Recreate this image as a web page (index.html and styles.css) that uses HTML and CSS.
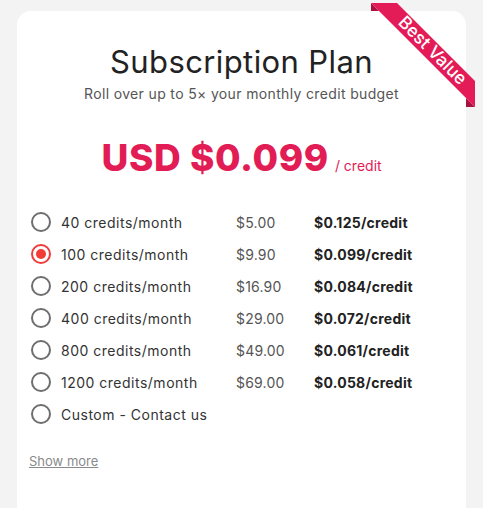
FILE: index.html
```html
<!DOCTYPE html>
<html>
<head>
<meta charset="utf-8">
<link rel="stylesheet" href="styles.css">
</head>
<body>
<div class="card">
  <svg class="ribbon" width="104" height="104" viewBox="0 0 104 104">
    <polygon points="0,0 8,8 0,8" fill="#a9123f"/>
    <polygon points="95,95 104,104 95,104" fill="#a9123f"/>
    <polygon points="0,0 26,0 104,78 104,104" fill="#e31c58"/>
    <text x="0" y="0" transform="translate(62,47) rotate(45)" text-anchor="middle" dominant-baseline="central" class="ribbon-text">Best Value</text>
  </svg>
  <h1 class="title">Subscription Plan</h1>
  <p class="subtitle">Roll over up to 5× your monthly credit budget</p>
  <div class="price"><span class="amount">USD $0.099</span><span class="unit">/ credit</span></div>
  <ul class="plans">
    <li class="plan"><span class="radio"></span><span class="label">40 credits/month</span><span class="cost">$5.00</span><span class="per">$0.125/credit</span></li>
    <li class="plan"><span class="radio checked"></span><span class="label">100 credits/month</span><span class="cost">$9.90</span><span class="per">$0.099/credit</span></li>
    <li class="plan"><span class="radio"></span><span class="label">200 credits/month</span><span class="cost">$16.90</span><span class="per">$0.084/credit</span></li>
    <li class="plan"><span class="radio"></span><span class="label">400 credits/month</span><span class="cost">$29.00</span><span class="per">$0.072/credit</span></li>
    <li class="plan"><span class="radio"></span><span class="label">800 credits/month</span><span class="cost">$49.00</span><span class="per">$0.061/credit</span></li>
    <li class="plan"><span class="radio"></span><span class="label">1200 credits/month</span><span class="cost">$69.00</span><span class="per">$0.058/credit</span></li>
    <li class="plan"><span class="radio"></span><span class="label">Custom - Contact us</span></li>
  </ul>
  <a class="more" href="#">Show more</a>
</div>
</body>
</html>
```
FILE: styles.css
```css
* { box-sizing: border-box; }
html, body { margin: 0; padding: 0; }
body {
  background: #f3f3f3;
  font-family: "Inter", "Liberation Sans", sans-serif;
  color: #333;
  height: 508px;
  overflow: hidden;
}
.card {
  position: relative;
  margin: 11px 0 0 17px;
  width: 449px;
  height: 520px;
  background: #fff;
  border-radius: 14px;
  padding: 33px 0 0 0;
}
.ribbon {
  position: absolute;
  top: -8px;
  right: -9px;
  overflow: visible;
}
.ribbon-text {
  fill: #fff;
  font-family: "Inter", sans-serif;
  font-size: 17.5px;
  font-weight: 500;
}
.title {
  margin: 0;
  text-align: center;
  font-size: 31px;
  font-weight: 400;
  letter-spacing: 0.4px;
  line-height: 36px;
  color: #222;
}
.subtitle {
  margin: 4px 0 0;
  text-align: center;
  font-size: 14px;
  letter-spacing: 0.35px;
  line-height: 20px;
  color: #555;
}
.price {
  margin-top: 32px;
  display: flex;
  justify-content: center;
  align-items: baseline;
  gap: 6px;
  color: #e21c55;
}
.amount {
  font-size: 37px;
  font-weight: 800;
  letter-spacing: 0.6px;
  line-height: 44px;
}
.unit {
  font-size: 14px;
}
.plans {
  list-style: none;
  margin: 26px 0 0;
  padding: 0 0 0 14px;
}
.plan {
  display: grid;
  grid-template-columns: 30px 175px 78px 1fr;
  align-items: center;
  height: 32px;
  font-size: 14px;
}
.radio {
  width: 20px;
  height: 20px;
  border: 2px solid #6e6e6e;
  border-radius: 50%;
  display: flex;
  align-items: center;
  justify-content: center;
}
.radio.checked { border-color: #ee3b3b; }
.radio.checked::after {
  content: "";
  width: 10px;
  height: 10px;
  border-radius: 50%;
  background: #f23d36;
}
.label { color: #333; letter-spacing: 0.5px; }
.cost { color: #555; letter-spacing: 0.2px; }
.per { color: #222; font-weight: 700; letter-spacing: 0.25px; }
.more {
  display: inline-block;
  margin: 23px 0 0 12px;
  font-size: 13px;
  color: #8a8a8a;
  text-decoration: underline;
}
```
